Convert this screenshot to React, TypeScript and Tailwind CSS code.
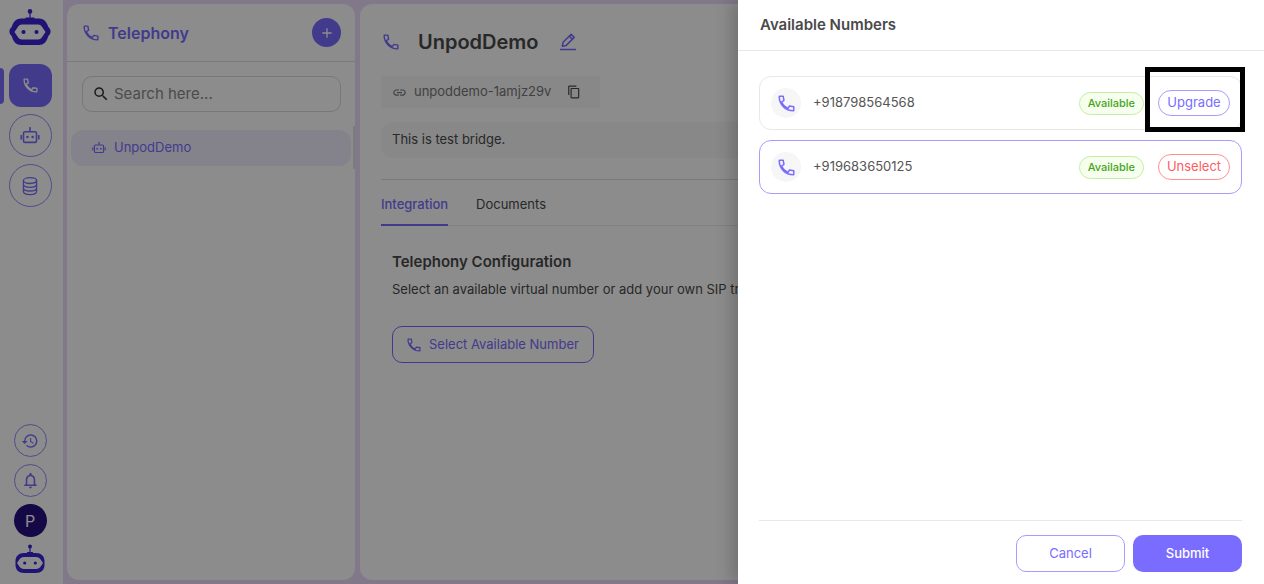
import React from 'react';
import {
  MdAdd,
  MdContentCopy,
  MdHistory,
  MdLink,
  MdOutlineNotifications,
  MdSearch,
} from 'react-icons/md';

interface IconProps {
  className?: string;
}

interface PhoneNumber {
  number: string;
  selected: boolean;
  highlighted: boolean;
}

const numbers: PhoneNumber[] = [
  { number: '+918798564568', selected: false, highlighted: true },
  { number: '+919683650125', selected: true, highlighted: false },
];

const Logo: React.FC<IconProps> = ({ className }) => (
  <svg viewBox="0 0 42 38" className={className} fill="none" aria-hidden="true">
    <circle cx="21" cy="3.4" r="2.3" fill="#3a25d8" />
    <path d="M21 4v8" stroke="#3a25d8" strokeWidth="1.2" />
    <path
      fillRule="evenodd"
      fill="#3a25d8"
      d="M17 9.5h8l1 1h4c4.5 0 7.5 3 9 7.500 0 1 1 1.500 2 3 .8 1.500.8 3.500 0 5-1 1.500-2 2-2 3-1.500 5-4.500 8-9 8H12c-4.500 0-7.500-3-9-8 0-1-1-1.500-2-3-.8-1.500-.8-3.500 0-5 1-1.500 2-2 2-3 1.500-4.500 4.500-7.500 9-7.500h4zM13 16.500c-2 0-3.300 1-4.500 3L5.500 24l3 4.500c1.200 2 2.500 3 4.500 3h16c2 0 3.300-1 4.500-3l3-4.500-3-4.500c-1.200-2-2.500-3-4.500-3z"
    />
    <circle cx="14.5" cy="24" r="2.1" fill="#3a25d8" />
    <circle cx="27.5" cy="24" r="2.1" fill="#3a25d8" />
  </svg>
);

const SmallLogo: React.FC<IconProps> = ({ className }) => (
  <svg viewBox="0 0 30 30" className={className} fill="none" aria-hidden="true">
    <circle cx="15" cy="2.5" r="2" fill="#3a25d8" />
    <path d="M15 3v6" stroke="#3a25d8" strokeWidth="1.2" />
    <path
      fillRule="evenodd"
      fill="#3a25d8"
      d="M12 8h6v1h3c5 0 8.5 3 8.5 8v4c0 5-3.5 8-8.5 8H9c-5 0-8.5-3-8.5-8v-4c0-5 3.5-8 8.5-8h3zM9 13c-2 0-4 1-5 3l-2 3 2 3c1 2 3 3 5 3h12c2 0 4-1 5-3l2-3-2-3c-1-2-3-3-5-3z"
    />
    <circle cx="9.7" cy="19" r="1.6" fill="#3a25d8" />
    <circle cx="20.3" cy="19" r="1.6" fill="#3a25d8" />
  </svg>
);

const PhoneIcon: React.FC<IconProps> = ({ className }) => (
  <svg viewBox="0 0 18 18" className={className} fill="none" stroke="currentColor" strokeWidth="1.6" strokeLinejoin="round" aria-hidden="true">
    <path d="M1.8 1.3h3.7l.8 4.5-2.6 1.8c1.5 3.2 3.6 5.3 6.7 6.7l1.8-2.6 4.5.8v3.7c0 .4-.2.5-.5.5C8 16.7 1.3 10 1.3 1.800c0-.3.1-.5.5-.5z" />
  </svg>
);

const BotIcon: React.FC<IconProps> = ({ className }) => (
  <svg viewBox="0 0 20 20" className={className} fill="none" stroke="currentColor" strokeWidth="1.6" aria-hidden="true">
    <rect x="3.5" y="5.8" width="13" height="10.6" rx="1.5" />
    <path d="M10 2.4v3M1.2 9v4.4M18.8 9v4.4" />
    <circle cx="10" cy="2" r="1" fill="currentColor" stroke="none" />
    <circle cx="7.4" cy="11" r="1.3" fill="currentColor" stroke="none" />
    <circle cx="12.6" cy="11" r="1.3" fill="currentColor" stroke="none" />
  </svg>
);

const DatabaseIcon: React.FC<IconProps> = ({ className }) => (
  <svg viewBox="0 0 20 20" className={className} fill="none" stroke="currentColor" strokeWidth="1.3" aria-hidden="true">
    <ellipse cx="10" cy="4.6" rx="6.6" ry="2.9" />
    <path d="M3.4 4.6v11c0 1.7 3 3 6.6 3s6.6-1.3 6.6-3v-11M3.4 8.3c0 1.7 3 3 6.6 3s6.6-1.3 6.6-3M3.4 12c0 1.7 3 3 6.6 3s6.6-1.3 6.6-3" />
  </svg>
);

const EditIcon: React.FC<IconProps> = ({ className }) => (
  <svg viewBox="0 0 18 18" className={className} fill="none" stroke="currentColor" strokeWidth="1.5" aria-hidden="true">
    <path d="M3.3 13.2l.8-3.9 8-8 3.1 3.1-8 8z" strokeLinejoin="round" />
    <path d="M10.3 3.1l3.1 3.1M1 16.5h16" />
  </svg>
);

const Sidebar: React.FC = () => (
  <nav className="flex w-[63px] shrink-0 flex-col items-center justify-between bg-white pt-2 pr-[3px] pb-[10px] text-[#796cff]">
    <div className="flex w-full flex-col items-center gap-[7px]">
      <Logo className="mb-[11px] h-[38px] w-[42px]" />
      <div className="flex w-full items-center">
        <span className="h-9 w-1 rounded-r bg-[#796cff]"></span>
        <button aria-label="Telephony" className="ml-[5px] flex size-[43px] items-center justify-center rounded-xl bg-[#796cff] text-white">
          <PhoneIcon className="size-[15px]" />
        </button>
      </div>
      <button aria-label="Agents" className="flex size-[43px] items-center justify-center rounded-full border border-[#9589fb]">
        <BotIcon className="size-5" />
      </button>
      <button aria-label="Knowledge base" className="flex size-[43px] items-center justify-center rounded-full border border-[#9589fb]">
        <DatabaseIcon className="size-5" />
      </button>
    </div>
    <div className="flex flex-col items-center gap-[7px]">
      <button aria-label="History" className="flex size-[33px] items-center justify-center rounded-full border border-[#9589fb]">
        <MdHistory className="size-[18px]" />
      </button>
      <button aria-label="Notifications" className="flex size-[33px] items-center justify-center rounded-full border border-[#9589fb]">
        <MdOutlineNotifications className="size-[19px]" />
      </button>
      <button className="flex size-[33px] items-center justify-center rounded-full bg-[#270f80] text-base text-white">P</button>
      <SmallLogo className="size-[30px]" />
    </div>
  </nav>
);

const BridgeList: React.FC = () => (
  <aside className="flex w-[288px] shrink-0 flex-col rounded-xl bg-white">
    <header className="flex h-[58px] items-center border-b border-[#dedede] pr-[14px] pl-4 text-[#796cff]">
      <PhoneIcon className="size-4" />
      <h1 className="ml-[9px] flex-1 text-base font-semibold">Telephony</h1>
      <button aria-label="Add bridge" className="flex size-[29px] items-center justify-center rounded-full bg-[#796cff] text-white">
        <MdAdd className="size-4" />
      </button>
    </header>
    <label className="mr-[14px] ml-[15px] mt-[14px] flex h-9 items-center gap-1 rounded-[10px] border border-[#d9d9d9] pl-[9px]">
      <MdSearch className="size-[18px] shrink-0 text-[#333]" />
      <input
        type="search"
        aria-label="Search"
        placeholder="Search here..."
        className="w-full bg-transparent text-[15px] outline-none placeholder:text-[#8a8a8a]"
      />
    </label>
    <div className="mt-[14px] flex items-start justify-between pl-1">
      <a href="#bridge" className="mt-1 flex h-9 w-[280px] items-center gap-2 rounded-xl bg-[#f1eeff] pl-[21px] text-[13px] text-[#796cff]">
        <BotIcon className="size-[14px]" />
        UnpodDemo
      </a>
      <span className="h-[43px] w-[2px] bg-[#e2e2e2]"></span>
    </div>
  </aside>
);

const BridgeDetails: React.FC = () => (
  <main className="min-w-0 flex-1 rounded-xl bg-white px-[21px] text-[13px] text-[#4a4a4a]">
    <div className="flex h-[72px] items-center pt-1">
      <PhoneIcon className="ml-[2px] size-4 text-[#796cff]" />
      <h2 className="ml-[19px] text-xl font-semibold">UnpodDemo</h2>
      <button aria-label="Edit name" className="ml-5 text-[#796cff]">
        <EditIcon className="size-[18px]" />
      </button>
    </div>
    <div className="flex h-8 w-[219px] items-center bg-[#f7f7f7] pl-[11px] text-[#777]">
      <MdLink className="size-[15px]" />
      <span className="ml-[7px]">unpoddemo-1amjz29v</span>
      <button aria-label="Copy" className="ml-4 text-[#4a4a4a]">
        <MdContentCopy className="size-[14px]" />
      </button>
    </div>
    <p className="mt-[14px] flex h-9 items-center rounded-xl bg-[#f7f7f7] px-[11px]">This is test bridge.</p>
    <div className="mt-[21px] flex gap-7 border-t border-b border-t-[#dedede] border-b-[#ebebeb]" role="tablist">
      <button role="tab" aria-selected="true" className="-mb-px h-[46px] border-b-2 border-[#796cff] pt-[6px] font-medium text-[#796cff]">
        Integration
      </button>
      <button role="tab" aria-selected="false" className="h-[45px] pt-1">
        Documents
      </button>
    </div>
    <section className="px-[11px] pt-[26px]">
      <h3 className="text-[15px] leading-5 font-semibold">Telephony Configuration</h3>
      <p className="mt-[7px] overflow-hidden leading-5 whitespace-nowrap">
        Select an available virtual number or add your own SIP trunk to enable calling.
      </p>
      <button className="mt-[27px] flex h-[37px] items-center gap-2 rounded-[10px] border border-[#796cff] px-[14px] text-[#796cff]">
        <PhoneIcon className="size-[14px]" />
        Select Available Number
      </button>
    </section>
  </main>
);

const NumberRow: React.FC<PhoneNumber> = ({ number, selected, highlighted }) => (
  <li
    className={`relative flex h-[54px] items-center rounded-xl border px-[11px] ${
      selected ? 'border-[#a79ef8]' : 'border-[#e8e8e8]'
    }`}
  >
    <span className="flex size-[30px] items-center justify-center rounded-full bg-[#f6f6f6] text-[#796cff]">
      <PhoneIcon className="size-[17px]" />
    </span>
    <span className="ml-3 flex-1 text-[13px] text-[#555]">{number}</span>
    <span className="flex h-[23px] items-center rounded-full border border-[#c5eda5] bg-[#f6ffed] px-2 text-[11px] font-medium text-[#45a41c]">
      Available
    </span>
    <button
      className={`ml-[14px] h-[26px] w-[72px] rounded-full border text-[13px] ${
        selected ? 'border-[#ff8f91] text-[#ff5c5f]' : 'border-[#a79ef8] text-[#796cff]'
      }`}
    >
      {selected ? 'Unselect' : 'Upgrade'}
    </button>
    {highlighted && <span className="pointer-events-none absolute -top-[10px] -right-1 h-[65px] w-[100px] border-5 border-black"></span>}
  </li>
);

const NumbersDrawer: React.FC = () => (
  <div
    role="dialog"
    aria-label="Available Numbers"
    className="flex w-[526px] flex-col bg-white shadow-[-6px_0_16px_rgba(0,0,0,0.2)]"
  >
    <h2 className="flex h-[51px] items-center border-b border-[#e8e8e8] px-[22px] text-[15px] font-semibold text-[#4a4a4a]">Available Numbers</h2>
    <ul className="flex flex-1 flex-col gap-[10px] pr-[22px] pl-[21px] pt-[25px]">
      {numbers.map((item) => (
        <NumberRow key={item.number} {...item} />
      ))}
    </ul>
    <footer className="mr-[22px] ml-[21px] flex justify-end gap-2 border-t border-[#e8e8e8] pt-[14px] pb-3 text-[13px]">
      <button className="h-[37px] w-[109px] rounded-[10px] border border-[#a79ef8] text-[#796cff]">Cancel</button>
      <button className="h-[37px] w-[109px] rounded-[10px] bg-[#796cff] font-medium text-white">Submit</button>
    </footer>
  </div>
);

const App: React.FC = () => {
  return (
    <div className="relative flex h-screen overflow-hidden bg-white font-['Inter','Noto_Sans',sans-serif]">
      <Sidebar />
      <div className="flex min-w-0 flex-1 gap-[5px] bg-[#ecdafa] p-1">
        <BridgeList />
        <BridgeDetails />
      </div>
      {/* Backdrop and drawer */}
      <div className="absolute inset-0 flex justify-end bg-black/45">
        <NumbersDrawer />
      </div>
    </div>
  );
};

export default App;
